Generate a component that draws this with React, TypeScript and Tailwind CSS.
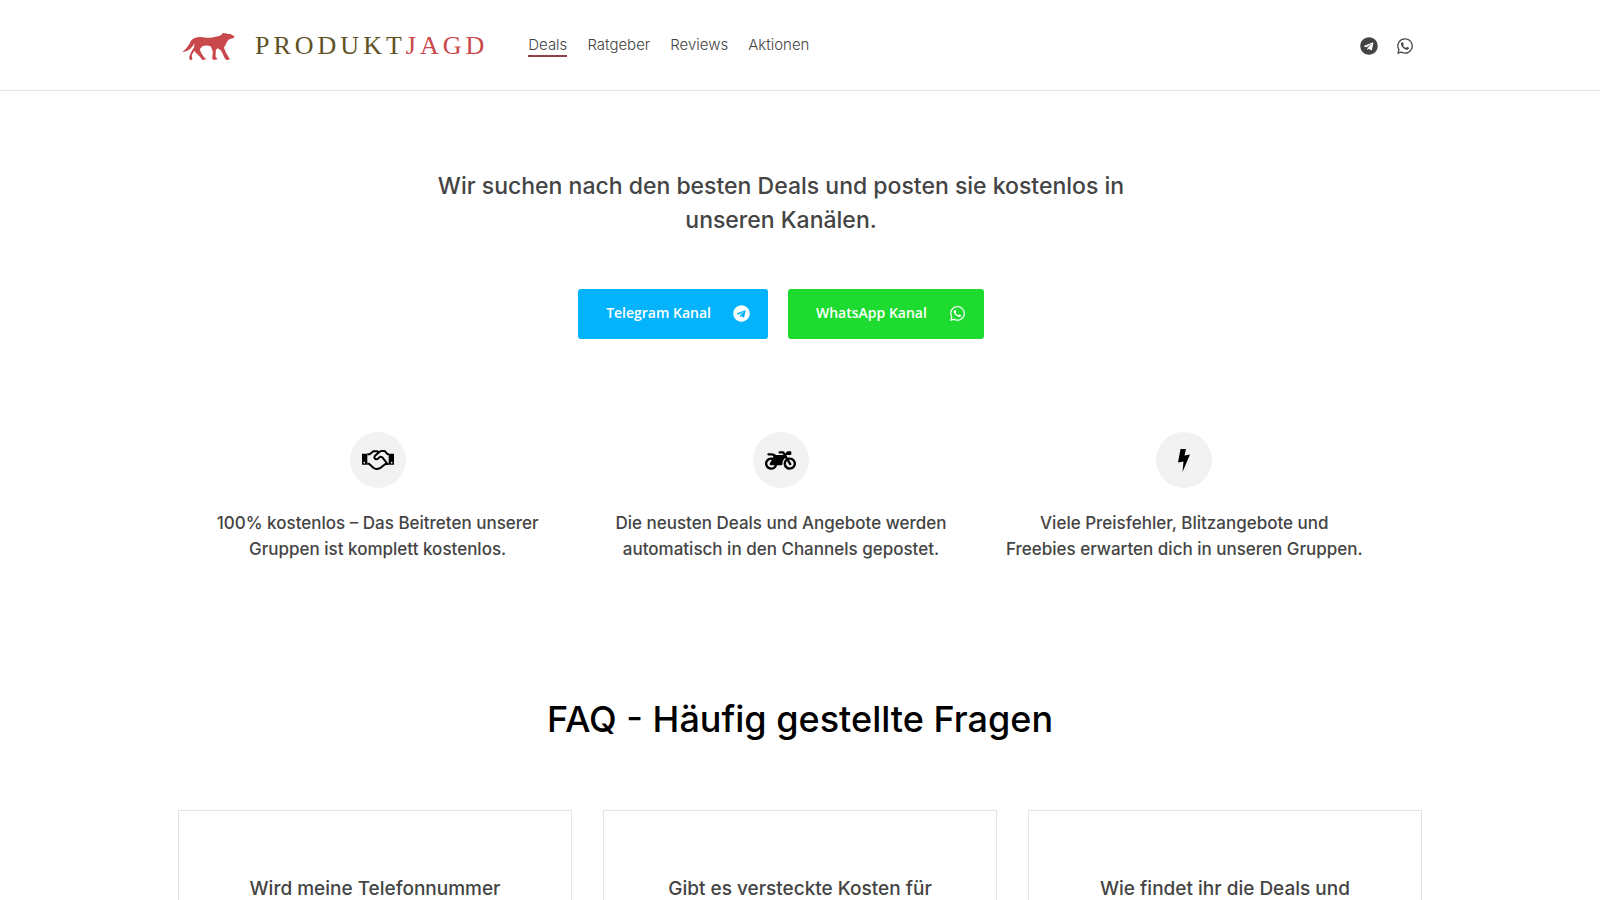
import type { ReactNode } from "react";
import { FaMotorcycle, FaTelegram, FaWhatsapp } from "react-icons/fa";

const navLinks = ["Deals", "Ratgeber", "Reviews", "Aktionen"];

const questions = [
  "Wird meine Telefonnummer",
  "Gibt es versteckte Kosten für",
  "Wie findet ihr die Deals und",
];

function Handshake() {
  return (
    <svg viewBox="0 0 96 60" className="h-5 w-8" fill="none" aria-hidden="true">
      <path d="M0 11h16v33H0zM80 11h16v33H80z" fill="currentColor" />
      <circle cx="7" cy="38" r="2.5" fill="#f2f2f2" />
      <circle cx="89" cy="38" r="2.5" fill="#f2f2f2" />
      <path
        d="M16 13h7L34 4h12l5 3 6-4h11l9 10h4M16 41h5l14 13q6 4 13 2l7-2 15-12h10M51 7 39 17q-4 7 1 10 5 2 9-2l6-5 6 2 12 15q2 3-2 6"
        stroke="currentColor"
        strokeWidth="6"
        strokeLinejoin="round"
      />
    </svg>
  );
}

function Bolt() {
  return (
    <svg viewBox="0 0 12 23" className="h-[23px] w-3" fill="currentColor" aria-hidden="true">
      <path d="M2.500 0h5.500L6.500 6.500l5.500-1L4.500 23l1-10.500L0 13.500z" />
    </svg>
  );
}

const features: { icon: ReactNode; lines: [string, string] }[] = [
  {
    icon: <Handshake />,
    lines: ["100% kostenlos – Das Beitreten unserer", "Gruppen ist komplett kostenlos."],
  },
  {
    icon: <FaMotorcycle size={31} />,
    lines: ["Die neusten Deals und Angebote werden", "automatisch in den Channels gepostet."],
  },
  {
    icon: <Bolt />,
    lines: ["Viele Preisfehler, Blitzangebote und", "Freebies erwarten dich in unseren Gruppen."],
  },
];

function Logo() {
  return (
    <a href="#" className="flex items-center gap-5" aria-label="Produktjagd">
      <svg viewBox="36 33 158 86" className="h-[29px] w-[53px]" fill="#c9484b" aria-hidden="true">
        <path d="M37 93Q51 81 59 67Q64 53 76 50Q88 46 104 49Q122 51 136 47Q148 45 154 41L158 35L162 37L167 35L169 39L180 39L193 46Q191 52 184 52L176 55Q168 62 165 73L161 80Q166 95 175 107L179 115L168 116L163 110Q158 98 152 88L143 81L137 86L136 106L142 114L130 116L126 112L128 92L122 76Q110 71 97 75L89 84Q92 96 101 107L109 114L97 116Q89 105 77 95L73 89L65 101L67 115L60 117L57 108L63 93L72 78L73 67Q62 86 48 90Z" />
      </svg>
      <span className="font-['Liberation_Serif',serif] text-[26px] leading-8 tracking-[4px] text-[#5f5225]">
        PRODUKT<span className="text-[#c9484b]">JAGD</span>
      </span>
    </a>
  );
}

function Header() {
  return (
    <header className="border-b border-[#e4e4e4]">
      <div className="mx-auto flex h-[90px] max-w-[1244px] items-center pt-0.5 pl-1 pr-2">
        <Logo />
        <nav className="ml-10 flex gap-5 text-[15px] leading-5 font-light text-[#444]">
          {navLinks.map((label, i) => (
            <a
              key={label}
              href="#"
              className={i === 0 ? "border-b-2 border-[#93404a]" : "border-b-2 border-transparent"}
            >
              {label}
            </a>
          ))}
        </nav>
        <div className="ml-auto flex items-center gap-[18px] text-[#444]">
          <a href="#" aria-label="Telegram">
            <FaTelegram size={18} />
          </a>
          <a href="#" aria-label="WhatsApp">
            <FaWhatsapp size={18} />
          </a>
        </div>
      </div>
    </header>
  );
}

export default function App() {
  return (
    <div className="h-screen overflow-hidden bg-white font-['Inter',sans-serif] text-[#444]">
      <Header />
      <main className="mx-auto max-w-[1244px]">
        <div className="pr-[38px]">
          <section className="flex flex-col items-center pt-[78px]">
            <h1 className="text-center text-[23px] leading-[34px] font-medium">
              Wir suchen nach den besten Deals und posten sie kostenlos in
              <br />
              unseren Kanälen.
            </h1>
            <div className="mt-[52px] flex gap-5 font-['Open_Sans',sans-serif] text-sm font-semibold text-white">
              <a
                href="#"
                className="flex h-[50px] items-center gap-[22px] rounded-[3px] bg-[#03b3fb] pr-[18px] pb-0.5 pl-7"
              >
                Telegram Kanal
                <FaTelegram size={17} />
              </a>
              <a
                href="#"
                className="flex h-[50px] items-center gap-[22px] rounded-[3px] bg-[#1edb2f] pr-[18px] pb-0.5 pl-7"
              >
                WhatsApp Kanal
                <FaWhatsapp size={17} />
              </a>
            </div>
          </section>

          <section className="-mx-0.5 mt-[93px] grid grid-cols-3">
            {features.map((f) => (
              <div key={f.lines[0]} className="flex flex-col items-center">
                <div className="flex size-14 items-center justify-center rounded-full bg-[#f2f2f2] text-black">
                  {f.icon}
                </div>
                <p className="mt-[22px] text-center text-[17px] leading-[26px] font-medium whitespace-nowrap">
                  {f.lines[0]}
                  <br />
                  {f.lines[1]}
                </p>
              </div>
            ))}
          </section>
        </div>

        <section>
          <h2 className="mt-[132px] text-center text-[36px] leading-[50px] font-medium text-black">
            FAQ - Häufig gestellte Fragen
          </h2>
          <div className="mt-[66px] grid grid-cols-3 gap-[31px]">
            {questions.map((q) => (
              <article key={q} className="border border-[#e4e4e4] px-10 py-16 text-center">
                <h3 className="text-[19px] leading-7 font-medium">{q}</h3>
              </article>
            ))}
          </div>
        </section>
      </main>
    </div>
  );
}
